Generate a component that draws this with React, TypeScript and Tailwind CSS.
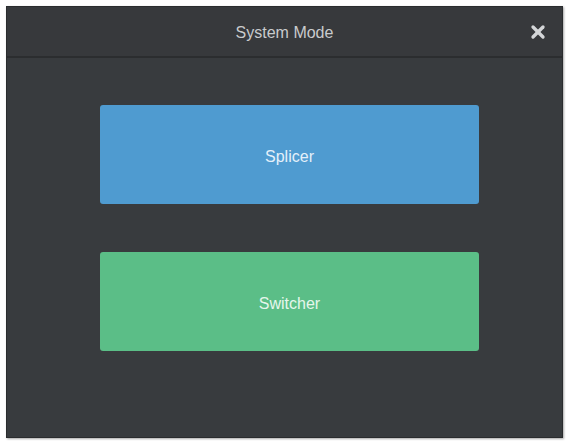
import { X } from 'lucide-react';

// System mode picker dialog
export default function App() {
  return (
    <div className="w-[570px] h-[443px] bg-white pt-[6px] pl-[6px] font-['Liberation_Sans',Arial,sans-serif]">
      <div className="w-[557px] h-[432px] flex flex-col bg-[#383b3e] border border-[#2a2c2e] shadow-[1px_1px_2px_rgba(0,0,0,0.35)]">
        {/* Header */}
        <div className="relative h-[51px] flex items-center justify-center bg-[#37393c] border-b-2 border-[#2b2d2f]">
          <span className="text-[16px] text-[#c9cbcd] pt-[2px]">System Mode</span>
          <button className="absolute right-[14px] top-[15px] text-[#d4d6d8]" aria-label="Close">
            <X className="w-[20px] h-[20px]" strokeWidth={4} />
          </button>
        </div>

        {/* Body */}
        <div className="flex flex-col gap-[48px] pt-[47px] pl-[93px]">
          <button className="w-[379px] h-[99px] rounded-[3px] bg-[#4f9bd0] text-[16px] text-[#e4f0fa] pt-[4px]">
            Splicer
          </button>
          <button className="w-[379px] h-[99px] rounded-[3px] bg-[#5bbe87] text-[16px] text-[#e6f6ec] pt-[4px]">
            Switcher
          </button>
        </div>
      </div>
    </div>
  );
}
